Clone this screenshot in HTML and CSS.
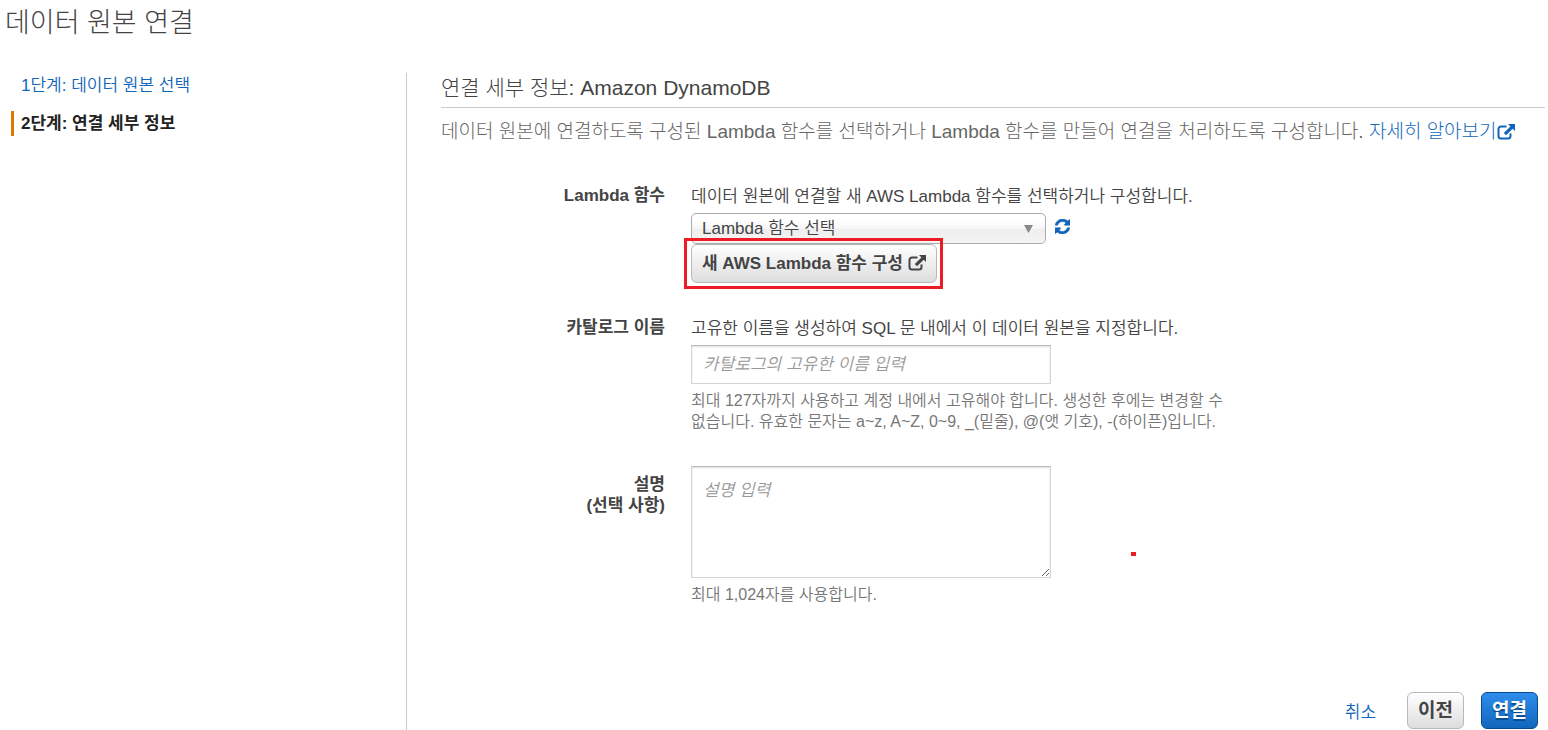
FILE: index.html
```html
<!DOCTYPE html>
<html lang="ko">
<head>
  <meta charset="UTF-8" />
  <meta name="viewport" content="width=device-width, initial-scale=1.0"/>
  <title>데이터 원본 연결</title>
  <link rel="stylesheet" href="styles.css">
</head>
<body>

  <h1>데이터 원본 연결</h1>

  <div class="layout">
    <nav class="steps">
      <a class="step" href="#">1단계: 데이터 원본 선택</a>
      <a class="step active" href="#" aria-current="step">2단계: 연결 세부 정보</a>
    </nav>

    <main class="content">
      <h2>연결 세부 정보: Amazon DynamoDB</h2>
      <p class="intro">데이터 원본에 연결하도록 구성된 Lambda 함수를 선택하거나 Lambda 함수를 만들어 연결을 처리하도록 구성합니다. <a href="#">자세히 알아보기<svg class="icon-external" viewBox="0 0 18 16"><path d="M9.5 2.5H4a2.5 2.5 0 0 0-2.500 2.500v7A2.500 2.500 0 0 0 4 14.500h7a2.500 2.500 0 0 0 2.500-2.500V9.500" fill="none" stroke="currentColor" stroke-width="2"/><path d="M11 0h7v7l-2.300-2.300-6.700 6.500-2.200-2.200 6.600-6.600z" fill="currentColor"/></svg></a></p>

      <form>
        <div class="row">
          <label class="label" for="lambda">Lambda 함수</label>
          <div class="field">
            <p class="description">데이터 원본에 연결할 새 AWS Lambda 함수를 선택하거나 구성합니다.</p>
            <div class="select-line">
              <div class="select-box">
                <select id="lambda">
                  <option>Lambda 함수 선택</option>
                </select>
                <svg class="arrow" viewBox="0 0 9 8"><path d="M0 0h9L4.500 8z" fill="#888"/></svg>
              </div>
              <button type="button" class="refresh" aria-label="새로 고침">
                <svg viewBox="0 0 1536 1536"><path fill="currentColor" stroke="currentColor" stroke-width="60" d="M1511 928q0 5-1 7-64 268-268 434.500t-478 166.500q-146 0-282.500-55t-243.500-157l-129 129q-19 19-45 19t-45-19-19-45v-448q0-26 19-45t45-19h448q26 0 45 19t19 45-19 45l-137 137q71 66 161 102t187 36q134 0 250-65t186-179q11-17 53-117 8-23 30-23h192q13 0 22.500 9.500t9.500 22.500zm25-800v448q0 26-19 45t-45 19h-448q-26 0-45-19t-19-45 19-45l138-138q-148-137-349-137-134 0-250 65t-186 179q-11 17-53 117-8 23-30 23h-199q-13 0-22.500-9.500t-9.500-22.500v-7q65-268 270-434.500t480-166.500q146 0 284 55.500t245 156.500l130-129q19-19 45-19t45 19 19 45z"/></svg>
              </button>
            </div>
            <div class="highlight">
              <button type="button" class="btn btn-create">새 AWS Lambda 함수 구성
                <svg class="icon-external" viewBox="0 0 18 16"><path d="M9.500 2.500H4a2.500 2.500 0 0 0-2.500 2.500v7A2.500 2.500 0 0 0 4 14.500h7a2.500 2.500 0 0 0 2.500-2.500V9.500" fill="none" stroke="currentColor" stroke-width="2"/><path d="M11 0h7v7l-2.300-2.300-6.700 6.500-2.200-2.200 6.600-6.600z" fill="currentColor"/></svg>
              </button>
            </div>
          </div>
        </div>

        <div class="row">
          <label class="label" for="catalog">카탈로그 이름</label>
          <div class="field">
            <p class="description">고유한 이름을 생성하여 SQL 문 내에서 이 데이터 원본을 지정합니다.</p>
            <input type="text" id="catalog" placeholder="카탈로그의 고유한 이름 입력" />
            <p class="hint">최대 127자까지 사용하고 계정 내에서 고유해야 합니다. 생성한 후에는 변경할 수 없습니다. 유효한 문자는 a~z, A~Z, 0~9, _(밑줄), @(앳 기호), -(하이픈)입니다.</p>
          </div>
        </div>

        <div class="row">
          <label class="label label-area" for="desc">설명<br>(선택 사항)</label>
          <div class="field">
            <div class="area-box">
              <textarea id="desc" placeholder="설명 입력"></textarea>
              <span class="marker"></span>
            </div>
            <p class="hint">최대 1,024자를 사용합니다.</p>
          </div>
        </div>
      </form>

      <div class="footer">
        <a href="#">취소</a>
        <button type="button" class="btn">이전</button>
        <button type="button" class="btn btn-primary">연결</button>
      </div>
    </main>
  </div>

</body>
</html>
```
FILE: styles.css
```css
* {
  box-sizing: border-box;
}

body {
  display: flex;
  flex-direction: column;
  min-height: 100vh;
  margin: 0;
  font-family: "Liberation Sans", "Noto Sans CJK KR", sans-serif;
  font-size: 17px;
  font-weight: 350;
  color: #444;
  background-color: #fff;
}

h1, h2, p {
  margin: 0;
}

a {
  color: #1166bb;
  text-decoration: none;
}

a:hover {
  text-decoration: underline;
}

h1 {
  padding-left: 5px;
  font-size: 27px;
  font-weight: 300;
  line-height: 46px;
  margin-bottom: 27px;
}

.layout {
  display: flex;
  flex: 1;
}

/* left navigation */
.steps {
  display: flex;
  flex-direction: column;
  gap: 13px;
  flex: 0 0 407px;
  padding-left: 11px;
  border-right: 1px solid #ccc;
}

.step {
  padding: 1px 0 0 7px;
  border-left: 3px solid transparent;
  line-height: 24px;
}

.step.active {
  border-left-color: #e07700;
  color: #222;
  font-weight: bold;
}

/* main column */
.content {
  display: flex;
  flex-direction: column;
  flex: 1;
  padding: 0 3px 1px 34px;
}

h2 {
  padding-bottom: 4px;
  border-bottom: 1px solid #ccc;
  font-size: 21px;
  font-weight: 300;
  line-height: 30px;
}

.intro {
  margin: 10px 0 39px;
  font-size: 19px;
  font-weight: 300;
  line-height: 28px;
  color: #666;
}

.icon-external {
  width: 18px;
  height: 16px;
  vertical-align: -2px;
}

form {
  display: flex;
  flex-direction: column;
  gap: 34px;
}

.row {
  display: flex;
  gap: 26px;
}

.label {
  flex: 0 0 224px;
  font-weight: bold;
  line-height: 21px;
  text-align: right;
}

.label-area {
  padding-top: 8px;
}

.field {
  flex: 0 1 550px;
}

.description {
  margin-bottom: 4px;
  line-height: 24px;
}

.hint {
  margin-top: 6px;
  font-size: 16px;
  line-height: 21px;
  color: #777;
}

.select-line {
  display: flex;
  gap: 9px;
}

.select-box {
  position: relative;
  width: 355px;
}

select {
  display: block;
  width: 100%;
  height: 31px;
  padding: 0 30px 0 10px;
  border: 1px solid #aaa;
  border-radius: 5px;
  background: linear-gradient(#fff 20%, #f6f6f6 50%, #eee 52%, #f4f4f4 100%);
  font: inherit;
  color: #444;
  appearance: none;
}

.arrow {
  position: absolute;
  top: 12px;
  right: 13px;
  width: 9px;
  height: 8px;
  pointer-events: none;
}

.refresh {
  height: 26px;
  padding: 0;
  border: none;
  background: none;
  color: #1166bb;
  cursor: pointer;
}

.refresh svg {
  display: block;
  width: 15px;
  height: 15px;
}

.btn {
  height: 37px;
  padding: 0 10px 5px;
  border: 1px solid #b8b8b8;
  border-radius: 6px;
  background: linear-gradient(#fff, #ddd);
  font-family: inherit;
  font-size: 19px;
  font-weight: bold;
  color: #444;
  cursor: pointer;
}

.btn-create {
  display: block;
  height: 39px;
  font-size: 17px;
}

.btn-primary {
  border-color: #0a4a8c;
  background: linear-gradient(#2f8ded, #1166bb);
  color: #fff;
  text-shadow: 0 2px 1px #0a4a8c;
}

/* red frame drawn over the create button */
.highlight {
  position: relative;
  width: fit-content;
}

.highlight::after {
  content: "";
  position: absolute;
  inset: -6px -6px -6px -7px;
  border: 3px solid #ed1c24;
  pointer-events: none;
}

input[type="text"],
textarea {
  display: block;
  width: 360px;
  border: 1px solid #d5d5d5;
  border-top-color: #bbb;
  box-shadow: inset 0 1px 2px #ddd;
  font: inherit;
  color: #444;
}

input[type="text"] {
  height: 39px;
  padding: 0 11px;
}

textarea {
  height: 112px;
  padding: 9px 11px;
}

::placeholder {
  font-style: italic;
  color: #999;
}

.area-box {
  position: relative;
}

.marker {
  position: absolute;
  top: 86px;
  left: 440px;
  width: 5px;
  height: 4px;
  background-color: #ed1c24;
}

.footer {
  display: flex;
  align-items: center;
  justify-content: flex-end;
  gap: 17px;
  margin-top: auto;
  padding-right: 7px;
}

.footer a {
  margin-right: 14px;
}
```
